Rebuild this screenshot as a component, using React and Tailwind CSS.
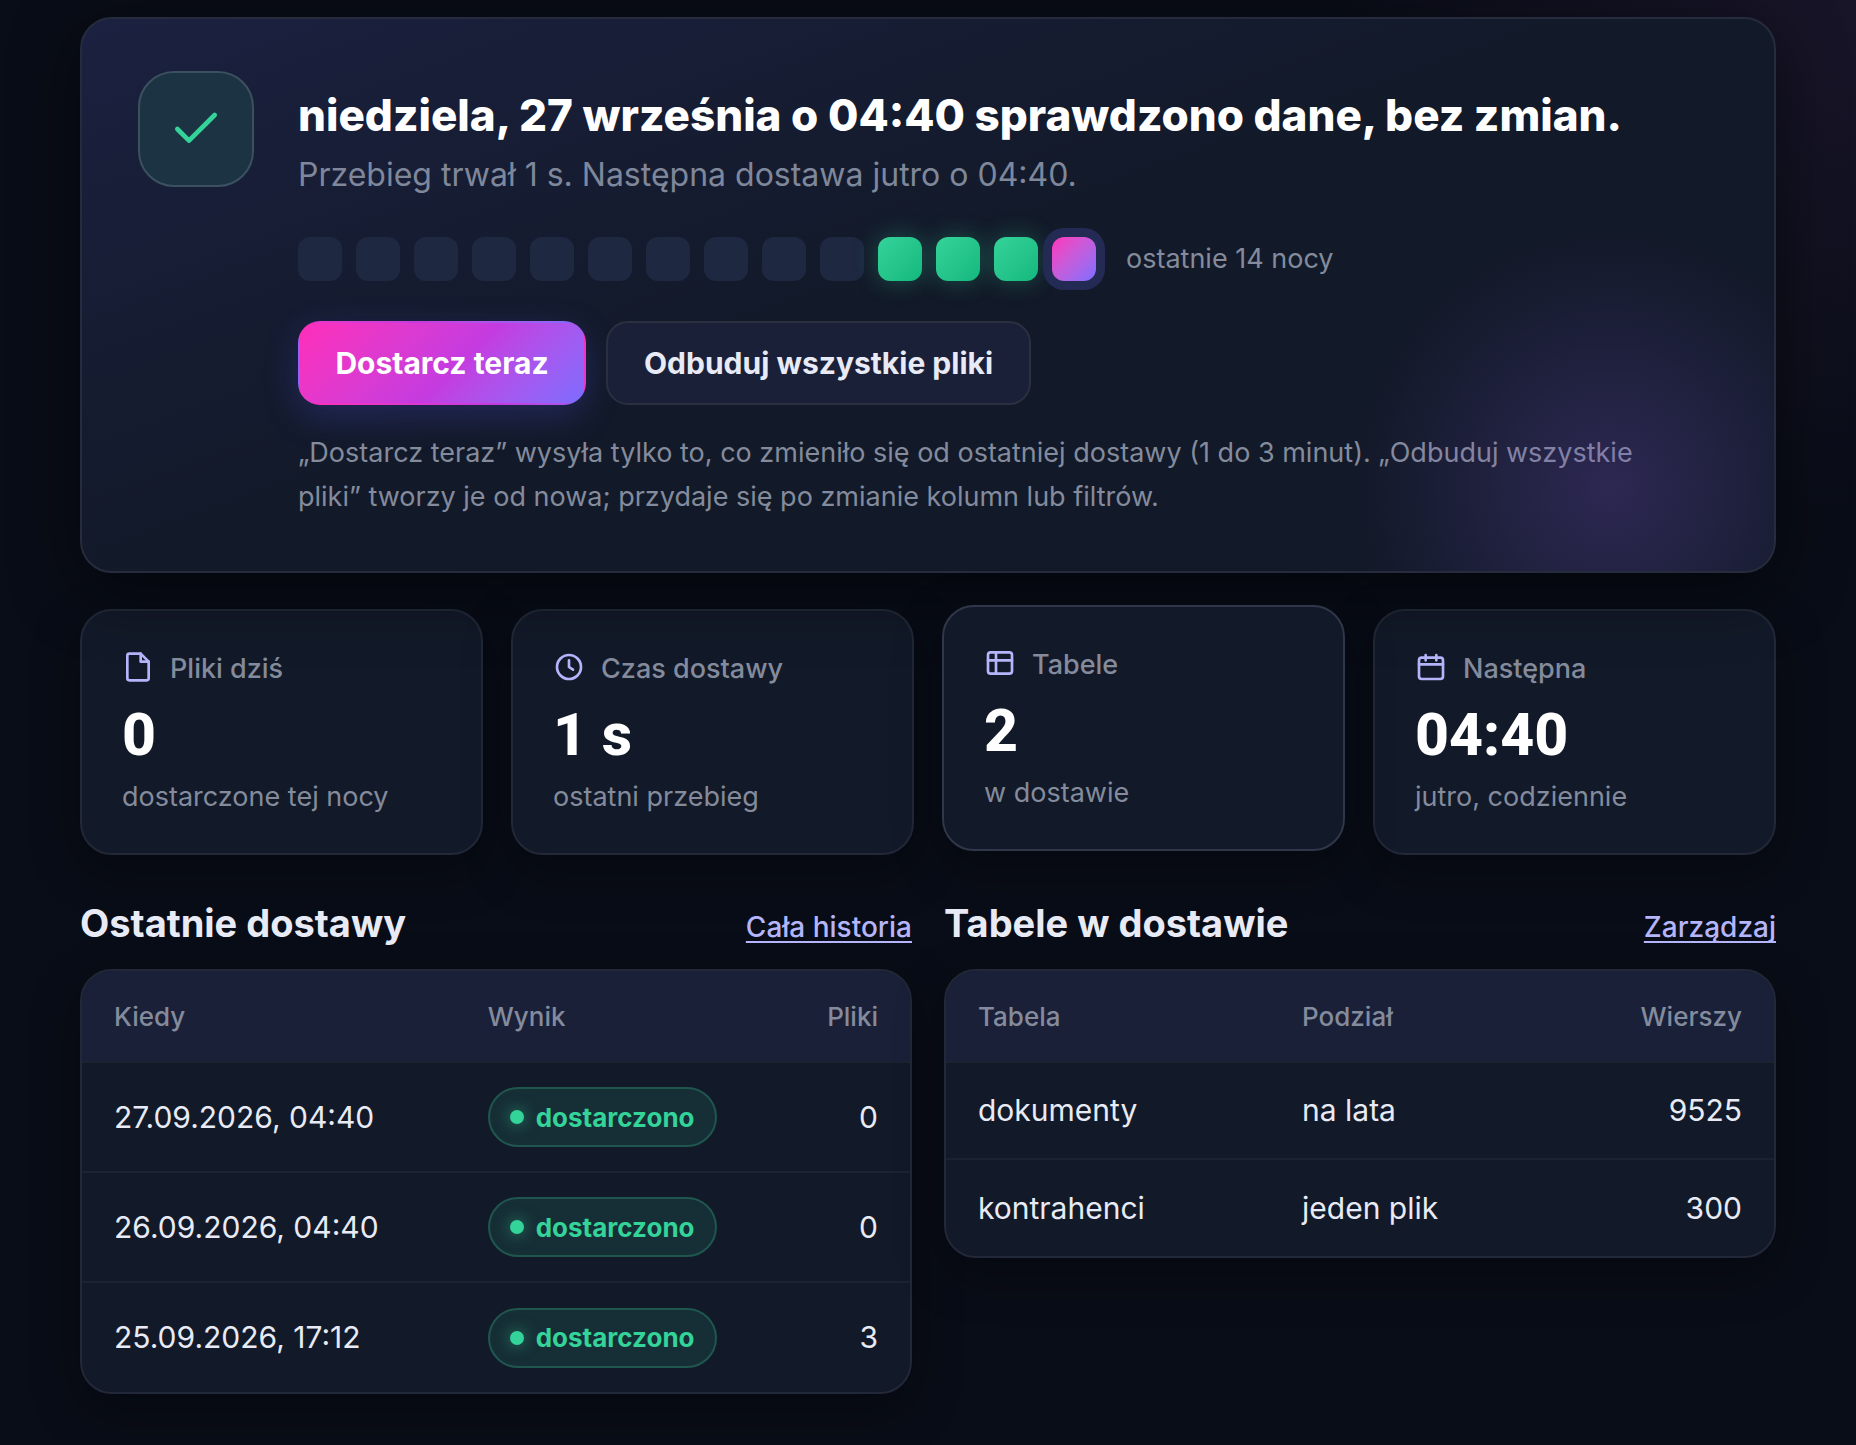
import clsx from 'clsx'

const nights = ['off', 'off', 'off', 'off', 'off', 'off', 'off', 'off', 'off', 'off', 'ok', 'ok', 'ok', 'today']

const nightStyles = {
  off: 'bg-[#1e2840]',
  ok: 'bg-linear-to-br from-[#34d399] to-[#14b87e] shadow-[0_0_24px_rgba(52,211,153,0.3)]',
  today: 'bg-linear-to-br from-[#ff2dba] to-[#7c6cff] shadow-[0_0_0_9px_#232a54]',
}

const stats = [
  { icon: FileIcon, label: 'Pliki dziś', value: '0', sub: 'dostarczone tej nocy' },
  { icon: ClockIcon, label: 'Czas dostawy', value: '1 s', sub: 'ostatni przebieg' },
  { icon: TableIcon, label: 'Tabele', value: '2', sub: 'w dostawie', raised: true },
  { icon: CalendarIcon, label: 'Następna', value: '04:40', sub: 'jutro, codziennie' },
]

const deliveries = [
  { when: '27.09.2026, 04:40', files: 0 },
  { when: '26.09.2026, 04:40', files: 0 },
  { when: '25.09.2026, 17:12', files: 3 },
]

const tables = [
  { name: 'dokumenty', split: 'na lata', rows: 9525 },
  { name: 'kontrahenci', split: 'jeden plik', rows: 300 },
]

function Icon({ className = 'size-8 text-[#b4b5fb]', children }) {
  return (
    <svg
      className={className}
      viewBox="0 0 24 24"
      fill="none"
      stroke="currentColor"
      strokeWidth="2"
      strokeLinecap="round"
      strokeLinejoin="round"
      aria-hidden="true"
    >
      {children}
    </svg>
  )
}

function FileIcon() {
  return (
    <Icon>
      <path d="M14 2H5.500A1.500 1.500 0 0 0 4 3.500v17A1.500 1.500 0 0 0 5.500 22h13a1.500 1.500 0 0 0 1.500-1.500V8z" />
      <path d="M14 2v6h6" />
    </Icon>
  )
}

function ClockIcon() {
  return (
    <Icon>
      <circle cx="12" cy="12" r="9" />
      <path d="M12 7v5l3 2" />
    </Icon>
  )
}

function TableIcon() {
  return (
    <Icon>
      <rect x="3" y="4" width="18" height="16" rx="2" />
      <path d="M3 10h18M9 4v16" />
    </Icon>
  )
}

function CalendarIcon() {
  return (
    <Icon>
      <rect x="3" y="5" width="18" height="16" rx="2" />
      <path d="M3 10h18M8 3v4M16 3v4" />
    </Icon>
  )
}

function StatCard({ icon: StatIcon, label, value, sub, raised }) {
  return (
    <div
      className={clsx(
        'rounded-[32px] border-2 bg-[#121928] px-10 pt-10 pb-[38px] shadow-[0_16px_48px_rgba(0,0,0,0.35)]',
        raised ? '-translate-y-1 border-[#31374a]' : 'border-[#222838]',
      )}
    >
      <div className="flex items-start gap-4">
        <StatIcon />
        <span className="text-[27px] leading-9 font-medium text-[#848b9c]">{label}</span>
      </div>
      <p className="mt-4 font-[Roboto,sans-serif] text-[59px] leading-16 font-extrabold text-white">{value}</p>
      <p className="mt-3 text-[27px] leading-9 text-[#848b9c]">{sub}</p>
    </div>
  )
}

function Status({ children }) {
  return (
    <span className="inline-flex h-15 items-center gap-3 rounded-full border-2 border-[#1f574f] bg-[#162e35] px-5 text-[26px] font-bold text-[#34d399]">
      <span className="size-3.5 rounded-full bg-[#34d399] shadow-[0_0_16px_rgba(52,211,153,0.6)]" />
      {children}
    </span>
  )
}

function Section({ title, link, children }) {
  return (
    <section>
      <div className="mb-5 flex items-baseline justify-between">
        <h2 className="text-[38px] leading-13 font-bold text-[#e8ebf5]">{title}</h2>
        <a
          href="#"
          className="text-[28px] font-medium text-[#b4b5fb] underline decoration-2 underline-offset-4 [text-decoration-skip-ink:none]"
        >
          {link}
        </a>
      </div>
      <div className="overflow-hidden rounded-[32px] border-2 border-[#222838] bg-[#121928] shadow-[0_16px_48px_rgba(0,0,0,0.35)]">
        {children}
      </div>
    </section>
  )
}

function HeadRow({ labels, first }) {
  return (
    <thead className="bg-[#1a2038] text-[26px] text-[#848b9c]">
      <tr className="h-[91px] border-b-2 border-[#1b2232]">
        <th className={clsx('pl-8 text-left font-medium', first)}>{labels[0]}</th>
        <th className="text-left font-medium">{labels[1]}</th>
        <th className="pr-8 text-right font-medium">{labels[2]}</th>
      </tr>
    </thead>
  )
}

export default function App() {
  return (
    <div className="min-h-screen bg-[#090d17] bg-[radial-gradient(circle_at_100%_0%,#191529_0%,transparent_22%)] px-20 pt-[17px] pb-12 font-[Inter,sans-serif] text-[#e8ebf5]">
      <main>
        <section className="relative overflow-hidden rounded-[32px] border-2 border-[#262c3d] bg-[#121928] bg-linear-160 from-[#1b2140] to-[#121928] to-50% px-14 py-13 shadow-[0_16px_64px_rgba(0,0,0,0.5)]">
          <div className="flex gap-11">
            <div className="flex size-29 shrink-0 items-center justify-center rounded-[36px] border-2 border-[#3b515f] bg-[#1c3344]">
              <Icon className="size-14 text-[#34d399]">
                <path d="M4 12l5 5L20 6" />
              </Icon>
            </div>
            <div className="pt-4">
              <h1 className="text-[44px] leading-14 font-extrabold text-white">
                niedziela, 27 września o 04:40 sprawdzono dane, bez zmian.
              </h1>
              <p className="mt-2 text-[32px] leading-12 text-[#7f879b]">
                Przebieg trwał 1 s. Następna dostawa jutro o 04:40.
              </p>
              <div className="mt-[38px] flex items-center gap-3.5">
                {nights.map((night, i) => (
                  <span key={i} className={clsx('size-11 rounded-xl', nightStyles[night])} />
                ))}
                <span className="ml-4 text-[27px] text-[#848b9c]">ostatnie 14 nocy</span>
              </div>
              <div className="mt-10 flex gap-5">
                <button className="h-21 w-72 rounded-[22px] border-2 border-transparent bg-linear-135 from-[#ff2dba] via-[#c43be0] via-55% to-[#7c6cff] text-[30px] font-bold text-white shadow-[0_12px_36px_rgba(90,90,255,0.22)]">
                  Dostarcz teraz
                </button>
                <button className="h-21 rounded-[22px] border-2 border-[#2a3040] bg-[#1a2038] px-9 text-[30px] font-bold text-[#e8ebf5]">
                  Odbuduj wszystkie pliki
                </button>
              </div>
              <p className="mt-[26px] pr-8 text-[27px] leading-11 text-[#848b9c]">
                „Dostarcz teraz” wysyła tylko to, co zmieniło się od ostatniej dostawy (1 do 3 minut). „Odbuduj
                wszystkie pliki” tworzy je od nowa; przydaje się po zmianie kolumn lub filtrów.
              </p>
            </div>
          </div>
          <div className="pointer-events-none absolute -right-24 -bottom-44 size-130 rounded-full bg-[radial-gradient(circle,rgba(124,84,210,0.25)_0%,transparent_70%)]" />
        </section>

        <div className="mt-9 grid grid-cols-4 gap-7">
          {stats.map((stat) => (
            <StatCard key={stat.label} {...stat} />
          ))}
        </div>

        <div className="mt-[42px] grid grid-cols-2 items-start gap-8">
          <Section title="Ostatnie dostawy" link="Cała historia">
            <table className="w-full text-[30px]">
              <HeadRow labels={['Kiedy', 'Wynik', 'Pliki']} first="w-[49%]" />
              <tbody className="divide-y-2 divide-[#1b2232]">
                {deliveries.map((d) => (
                  <tr key={d.when} className="h-[110px]">
                    <td className="pl-8">{d.when}</td>
                    <td>
                      <Status>dostarczono</Status>
                    </td>
                    <td className="pr-8 text-right">{d.files}</td>
                  </tr>
                ))}
              </tbody>
            </table>
          </Section>

          <Section title="Tabele w dostawie" link="Zarządzaj">
            <table className="w-full text-[30px]">
              <HeadRow labels={['Tabela', 'Podział', 'Wierszy']} first="w-[43%]" />
              <tbody className="divide-y-2 divide-[#1b2232]">
                {tables.map((t) => (
                  <tr key={t.name} className="h-[97px]">
                    <td className="pl-8">{t.name}</td>
                    <td>{t.split}</td>
                    <td className="pr-8 text-right">{t.rows}</td>
                  </tr>
                ))}
              </tbody>
            </table>
          </Section>
        </div>
      </main>
    </div>
  )
}
